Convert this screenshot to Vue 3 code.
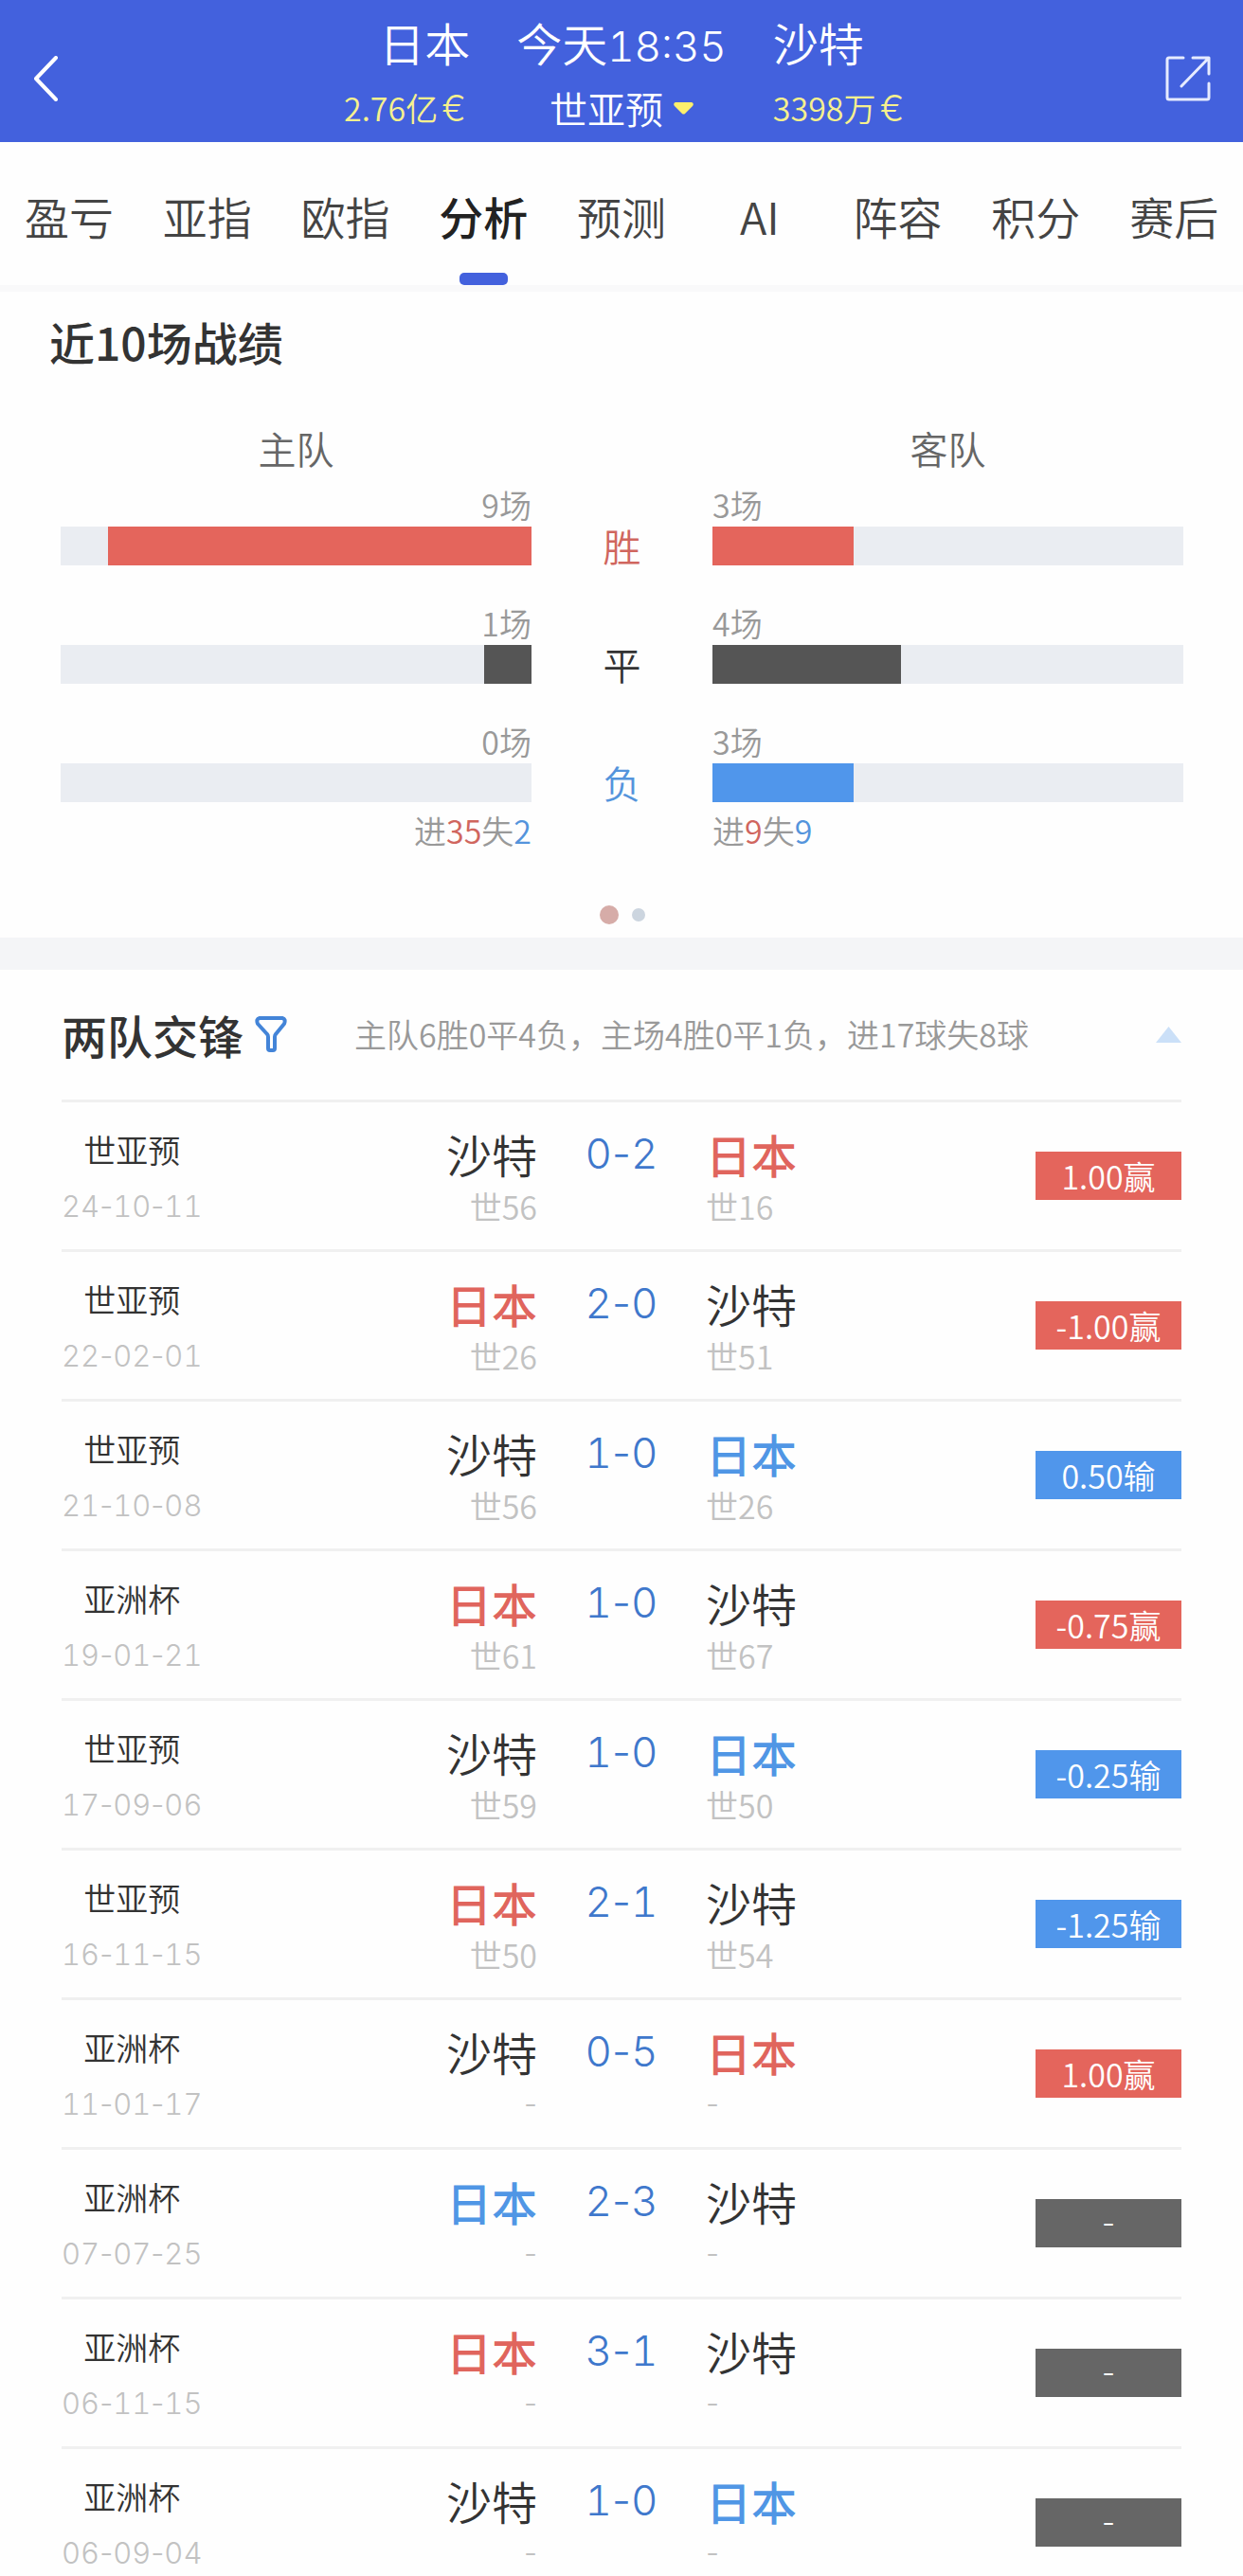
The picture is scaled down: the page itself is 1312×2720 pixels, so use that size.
<script setup>
import { ref } from 'vue'

const tabs = ['盈亏', '亚指', '欧指', '分析', '预测', 'AI', '阵容', '积分', '赛后']
const activeTab = ref('分析')

const form = [
  { key: 'win', name: '胜', home: 9, away: 3 },
  { key: 'draw', name: '平', home: 1, away: 4 },
  { key: 'loss', name: '负', home: 0, away: 3 }
]

const matches = [
  { league: '世亚预', date: '24-10-11', home: '沙特', homeRank: '世56', score: '0-2', away: '日本', awayRank: '世16', state: 'win', odds: '1.00赢', badge: 'win' },
  { league: '世亚预', date: '22-02-01', home: '日本', homeRank: '世26', score: '2-0', away: '沙特', awayRank: '世51', state: 'win', odds: '-1.00赢', badge: 'win' },
  { league: '世亚预', date: '21-10-08', home: '沙特', homeRank: '世56', score: '1-0', away: '日本', awayRank: '世26', state: 'loss', odds: '0.50输', badge: 'loss' },
  { league: '亚洲杯', date: '19-01-21', home: '日本', homeRank: '世61', score: '1-0', away: '沙特', awayRank: '世67', state: 'win', odds: '-0.75赢', badge: 'win' },
  { league: '世亚预', date: '17-09-06', home: '沙特', homeRank: '世59', score: '1-0', away: '日本', awayRank: '世50', state: 'loss', odds: '-0.25输', badge: 'loss' },
  { league: '世亚预', date: '16-11-15', home: '日本', homeRank: '世50', score: '2-1', away: '沙特', awayRank: '世54', state: 'win', odds: '-1.25输', badge: 'loss' },
  { league: '亚洲杯', date: '11-01-17', home: '沙特', homeRank: '-', score: '0-5', away: '日本', awayRank: '-', state: 'win', odds: '1.00赢', badge: 'win' },
  { league: '亚洲杯', date: '07-07-25', home: '日本', homeRank: '-', score: '2-3', away: '沙特', awayRank: '-', state: 'loss', odds: '-', badge: 'none' },
  { league: '亚洲杯', date: '06-11-15', home: '日本', homeRank: '-', score: '3-1', away: '沙特', awayRank: '-', state: 'win', odds: '-', badge: 'none' },
  { league: '亚洲杯', date: '06-09-04', home: '沙特', homeRank: '-', score: '1-0', away: '日本', awayRank: '-', state: 'loss', odds: '-', badge: 'none' }
]

const teamClass = (name, state) => (name === '日本' ? ['focus', state] : [])
</script>

<template>
  <div class="page">
    <header class="top">
      <button class="icon-btn" type="button" aria-label="返回">
        <svg width="48" height="48" viewBox="0 0 48 48" fill="none" stroke="#fff" stroke-width="4" stroke-linecap="round" stroke-linejoin="round">
          <path d="M25 2 L4 24 L25 46" />
        </svg>
      </button>
      <div class="fixture">
        <div class="side home">
          <span class="main">日本</span>
          <span class="value">2.76亿<span class="euro">€</span></span>
        </div>
        <div class="side centre">
          <span class="main">今天<span class="num large">18:35</span></span>
          <button class="league-btn" type="button">
            世亚预
            <svg width="21" height="13" viewBox="0 0 21 13"><path d="M2 0 H19 Q22 1 20 4 L12 12 Q10.500 13 9 12 L1 4 Q-1 1 2 0Z" fill="#fdf06c" /></svg>
          </button>
        </div>
        <div class="side">
          <span class="main">沙特</span>
          <span class="value">3398万<span class="euro">€</span></span>
        </div>
      </div>
      <button class="icon-btn" type="button" aria-label="分享">
        <svg width="48" height="48" viewBox="0 0 48 48" fill="none" stroke="#e6ebff" stroke-width="3" stroke-linecap="round" stroke-linejoin="round">
          <path d="M19 2 H4 Q2 2 2 4 V44 Q2 46 4 46 H44 Q46 46 46 44 V29 M29 2 H46 V19 M45 3 L17 32" />
        </svg>
      </button>
    </header>

    <nav class="tabs">
      <button
        v-for="tab in tabs"
        :key="tab"
        type="button"
        class="tab"
        :class="{ active: tab === activeTab }"
        @click="activeTab = tab"
      >{{ tab }}</button>
    </nav>

    <section class="recent">
      <h2>近10场战绩</h2>
      <div class="form-grid heads">
        <span>主队</span>
        <span></span>
        <span>客队</span>
      </div>
      <div v-for="row in form" :key="row.key" class="form-grid form-row" :class="row.key">
        <div class="cell home">
          <span class="count">{{ row.home }}场</span>
          <div class="track"><div class="fill" :style="{ width: row.home * 10 + '%' }"></div></div>
        </div>
        <span class="name">{{ row.name }}</span>
        <div class="cell">
          <span class="count">{{ row.away }}场</span>
          <div class="track"><div class="fill" :style="{ width: row.away * 10 + '%' }"></div></div>
        </div>
      </div>
      <div class="form-grid goals">
        <span class="right">进<b class="red">35</b>失<b class="blue">2</b></span>
        <span></span>
        <span>进<b class="red">9</b>失<b class="blue">9</b></span>
      </div>
      <div class="dots"><i class="on"></i><i></i></div>
    </section>

    <section class="h2h">
      <div class="h2h-head">
        <h2>两队交锋</h2>
        <button class="filter" type="button" aria-label="筛选">
          <svg width="34" height="40" viewBox="0 0 34 40" fill="none" stroke="#4384d8" stroke-width="4" stroke-linejoin="round">
            <path d="M5 3 H29 Q33 4 31 9 L22 20 Q21 21 21 23 V35 Q21 37 19 37 H16 Q14 37 14 35 V23 Q14 21 13 20 L3 9 Q1 4 5 3Z" />
          </svg>
        </button>
        <p>主队6胜0平4负，主场4胜0平1负，进17球失8球</p>
        <button class="fold" type="button" aria-label="收起">
          <svg width="27" height="17" viewBox="0 0 27 17"><path d="M13.500 0 L27 17 H0Z" fill="#cbe0f8" /></svg>
        </button>
      </div>
      <table>
        <colgroup>
          <col class="c-edge" /><col /><col class="c-score" /><col /><col class="c-edge" />
        </colgroup>
        <tbody>
          <tr v-for="m in matches" :key="m.date">
            <td>
              <div class="meta">
                <span class="league">{{ m.league }}</span>
                <span class="small num"><template v-for="(part, i) in m.date.split('-')" :key="i"><span v-if="i" class="dash">-</span>{{ part }}</template></span>
              </div>
            </td>
            <td class="right">
              <div class="team" :class="teamClass(m.home, m.state)">{{ m.home }}</div>
              <div class="small" :class="{ 'num dash': m.homeRank === '-' }">{{ m.homeRank }}</div>
            </td>
            <td class="score num large"><template v-for="(part, i) in m.score.split('-')" :key="i"><span v-if="i" class="dash">-</span>{{ part }}</template></td>
            <td>
              <div class="team" :class="teamClass(m.away, m.state)">{{ m.away }}</div>
              <div class="small" :class="{ 'num dash': m.awayRank === '-' }">{{ m.awayRank }}</div>
            </td>
            <td><div class="badge" :class="[m.badge, { 'num dash': m.odds === '-' }]">{{ m.odds }}</div></td>
          </tr>
        </tbody>
      </table>
    </section>
  </div>
</template>

<style>
body {
  margin: 0;
  background: #fefefe;
}
</style>

<style scoped>
.page {
  font-family: "Noto Sans CJK SC", "Noto Sans", sans-serif;
  font-weight: 350;
  font-size: 34px;
  line-height: 40px;
  color: #333;
}
button {
  display: block;
  margin: 0;
  padding: 0;
  border: 0;
  background: none;
  font: inherit;
  color: inherit;
  cursor: pointer;
}
svg {
  display: block;
}
h2 {
  margin: 0;
  font-size: 48px;
  line-height: 60px;
  font-weight: 500;
  white-space: nowrap;
}
.right {
  text-align: right;
}
.num {
  font-family: Inter, "Noto Sans CJK SC", sans-serif;
  font-variant-numeric: tabular-nums;
  font-size: 31px;
  white-space: nowrap;
}
.num.large {
  font-size: 44px;
}
.dash {
  font-variant-numeric: normal;
}

.top {
  display: flex;
  align-items: center;
  box-sizing: border-box;
  padding: 14px 34px 11px;
  background: #4361dd;
  color: #fff;
}
.icon-btn {
  flex: none;
  margin-top: 12px;
}
.fixture {
  flex: 1;
  display: grid;
  grid-template-columns: 1fr auto 1fr;
  column-gap: 49px;
}
.side {
  display: flex;
  flex-direction: column;
  gap: 15px;
  align-items: flex-start;
}
.side.home {
  align-items: flex-end;
}
.side.centre {
  align-items: center;
}
.main {
  height: 60px;
  font-size: 48px;
  line-height: 60px;
}
.value {
  height: 50px;
  line-height: 50px;
  color: #f6f08e;
}
.euro {
  display: inline-block;
  width: 34px;
  text-align: center;
  font-family: Inter, sans-serif;
  font-size: 38px;
}
.league-btn {
  display: flex;
  align-items: center;
  gap: 11px;
  font-size: 40px;
  line-height: 50px;
}

.tabs {
  display: flex;
  border-bottom: 7px solid #f9f9fa;
}
.tab {
  flex: 1 1 0;
  height: 151px;
  box-sizing: border-box;
  display: flex;
  flex-direction: column;
  align-items: center;
  padding-top: 48px;
  font-size: 47px;
  line-height: 60px;
  color: #444;
}
.tab.active {
  font-weight: 500;
  color: #222;
}
.tab.active::after {
  content: "";
  width: 51px;
  height: 13px;
  margin-top: auto;
  border-radius: 5px;
  background: #4361dd;
}

.recent {
  padding: 22px 63px 14px 64px;
  border-bottom: 34px solid #f4f5f7;
}
.recent h2 {
  margin-left: -12px;
}
.form-grid {
  display: grid;
  grid-template-columns: 1fr 191px 1fr;
}
.heads {
  margin-top: 59px;
  margin-bottom: 16px;
  font-size: 40px;
  line-height: 48px;
  text-align: center;
  color: #666;
}
.form-row + .form-row {
  margin-top: 41px;
}
.cell {
  display: flex;
  flex-direction: column;
  gap: 3px;
}
.count,
.goals {
  color: #999;
}
.cell.home {
  text-align: right;
}
.track {
  display: flex;
  height: 41px;
  background: #eaedf2;
}
.cell.home .track {
  justify-content: flex-end;
}
.name {
  align-self: end;
  text-align: center;
  font-size: 40px;
  line-height: 41px;
}
.win .fill {
  background: #e4655c;
}
.draw .fill {
  background: #555;
}
.loss .fill {
  background: #5096eb;
}
.win .name,
.red {
  color: #d0665e;
}
.loss .name,
.blue {
  color: #5494dc;
}
.goals {
  margin-top: 10px;
}
.goals b {
  font-weight: inherit;
}
.dots {
  display: flex;
  align-items: center;
  justify-content: center;
  gap: 14px;
  height: 20px;
  margin-top: 59px;
}
.dots i {
  width: 14px;
  height: 14px;
  border-radius: 50%;
  background: #ccd5df;
}
.dots .on {
  width: 20px;
  height: 20px;
  background: #d6aca8;
}

.h2h {
  padding: 0 65px;
}
.h2h-head {
  display: flex;
  align-items: center;
  padding: 38px 0 39px;
}
.filter {
  margin-left: 12px;
}
.h2h-head p {
  margin: 0 0 0 71px;
  color: #999;
  white-space: nowrap;
}
.fold {
  margin-left: auto;
}
table {
  width: 100%;
  table-layout: fixed;
  border-collapse: separate;
  border-spacing: 0;
}
.c-edge {
  width: 154px;
}
.c-score {
  width: 178px;
}
td {
  padding: 26px 0 25px;
  border-top: 3px solid #f0f0f0;
  vertical-align: top;
}
tr:last-child td {
  padding-bottom: 0;
}
.meta {
  display: inline-flex;
  flex-direction: column;
  align-items: center;
  gap: 20px;
  padding-top: 4px;
  vertical-align: top;
}
.league {
  color: #333;
}
.small {
  color: #c2c2c2;
}
.team {
  margin-bottom: 8px;
  font-size: 48px;
  line-height: 56px;
}
.focus {
  font-weight: 500;
}
.focus.win {
  color: #e0655d;
}
.focus.loss {
  color: #5096e5;
}
.score {
  text-align: center;
  line-height: 56px;
  color: #3f78cc;
}
.badge {
  margin-top: 26px;
  line-height: 51px;
  text-align: center;
  color: #fff;
}
.badge.win {
  background: #e4655c;
}
.badge.loss {
  background: #5096eb;
}
.badge.none {
  background: #666;
}
</style>
